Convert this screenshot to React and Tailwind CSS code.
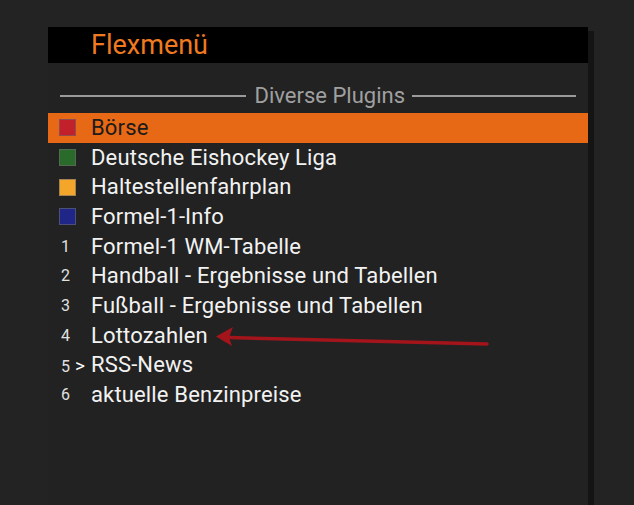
import React from "react";

const items = [
  { label: "Börse", color: "bg-[#c2202b]", active: true },
  { label: "Deutsche Eishockey Liga", color: "bg-[#2a6b2c]" },
  { label: "Haltestellenfahrplan", color: "bg-[#f4a62a]" },
  { label: "Formel-1-Info", color: "bg-[#1f2688]" },
  { label: "Formel-1 WM-Tabelle", num: "1" },
  { label: "Handball - Ergebnisse und Tabellen", num: "2" },
  { label: "Fußball - Ergebnisse und Tabellen", num: "3" },
  { label: "Lottozahlen", num: "4" },
  { label: "RSS-News", num: "5", sub: true },
  { label: "aktuelle Benzinpreise", num: "6" },
];

const App = () => {
  return (
    <div
      className="relative w-[634px] h-[505px] overflow-hidden bg-[#232323] pt-[27px] pl-[48px]"
      style={{ fontFamily: "Roboto, 'Liberation Sans', sans-serif" }}
    >
      {/* Menu panel */}
      <div className="w-[540px] h-[500px] bg-[#222222] shadow-[6px_4px_0_#141414]">
        <div className="h-[36px] bg-black flex items-center pl-[43px]">
          <span className="text-[27px] text-[#ef7a1f] leading-none mt-[1px]">Flexmenü</span>
        </div>

        {/* Section divider */}
        <div className="flex items-center px-[12px] mt-[20px] h-[26px]">
          <div className="flex-1 h-[2px] bg-[#9a9a9a]" />
          <span className="text-[22px] text-[#a0a0a0] leading-none pl-[9px] pr-[7px]">Diverse Plugins</span>
          <div className="w-[164px] h-[2px] bg-[#9a9a9a]" />
        </div>

        <ul className="mt-[4px]">
          {items.map((item) => (
            <li
              key={item.label}
              className={`flex items-center h-[29.7px] ${
                item.active ? "bg-[#e76815] text-[#1b1b1b]" : "text-[#f2f2f2]"
              }`}
            >
              <div className="w-[43px] flex items-center pl-[11px]">
                {item.color ? (
                  <div
                    className={`w-[17px] h-[17px] border border-[#6a6a6a]/60 ${item.color}`}
                  />
                ) : (
                  <span className="text-[16px] text-[#e0e0e0] pl-[2px] leading-none">
                    {item.num}
                    {item.sub && <span className="text-[19px] text-white pl-[5px]">&gt;</span>}
                  </span>
                )}
              </div>
              <span className="text-[22px] leading-none tracking-[0.15px]">{item.label}</span>
            </li>
          ))}
        </ul>
      </div>

      {/* Annotation arrow */}
      <svg
        className="absolute left-0 top-0"
        width="634"
        height="505"
        viewBox="0 0 634 505"
      >
        <line x1="487" y1="344" x2="228" y2="337.5" stroke="#a3141b" strokeWidth="3.5" strokeLinecap="round" />
        <polygon points="216,336.5 233,327 229,337.5 232,346" fill="#a3141b" />
      </svg>
    </div>
  );
};

export default App;
